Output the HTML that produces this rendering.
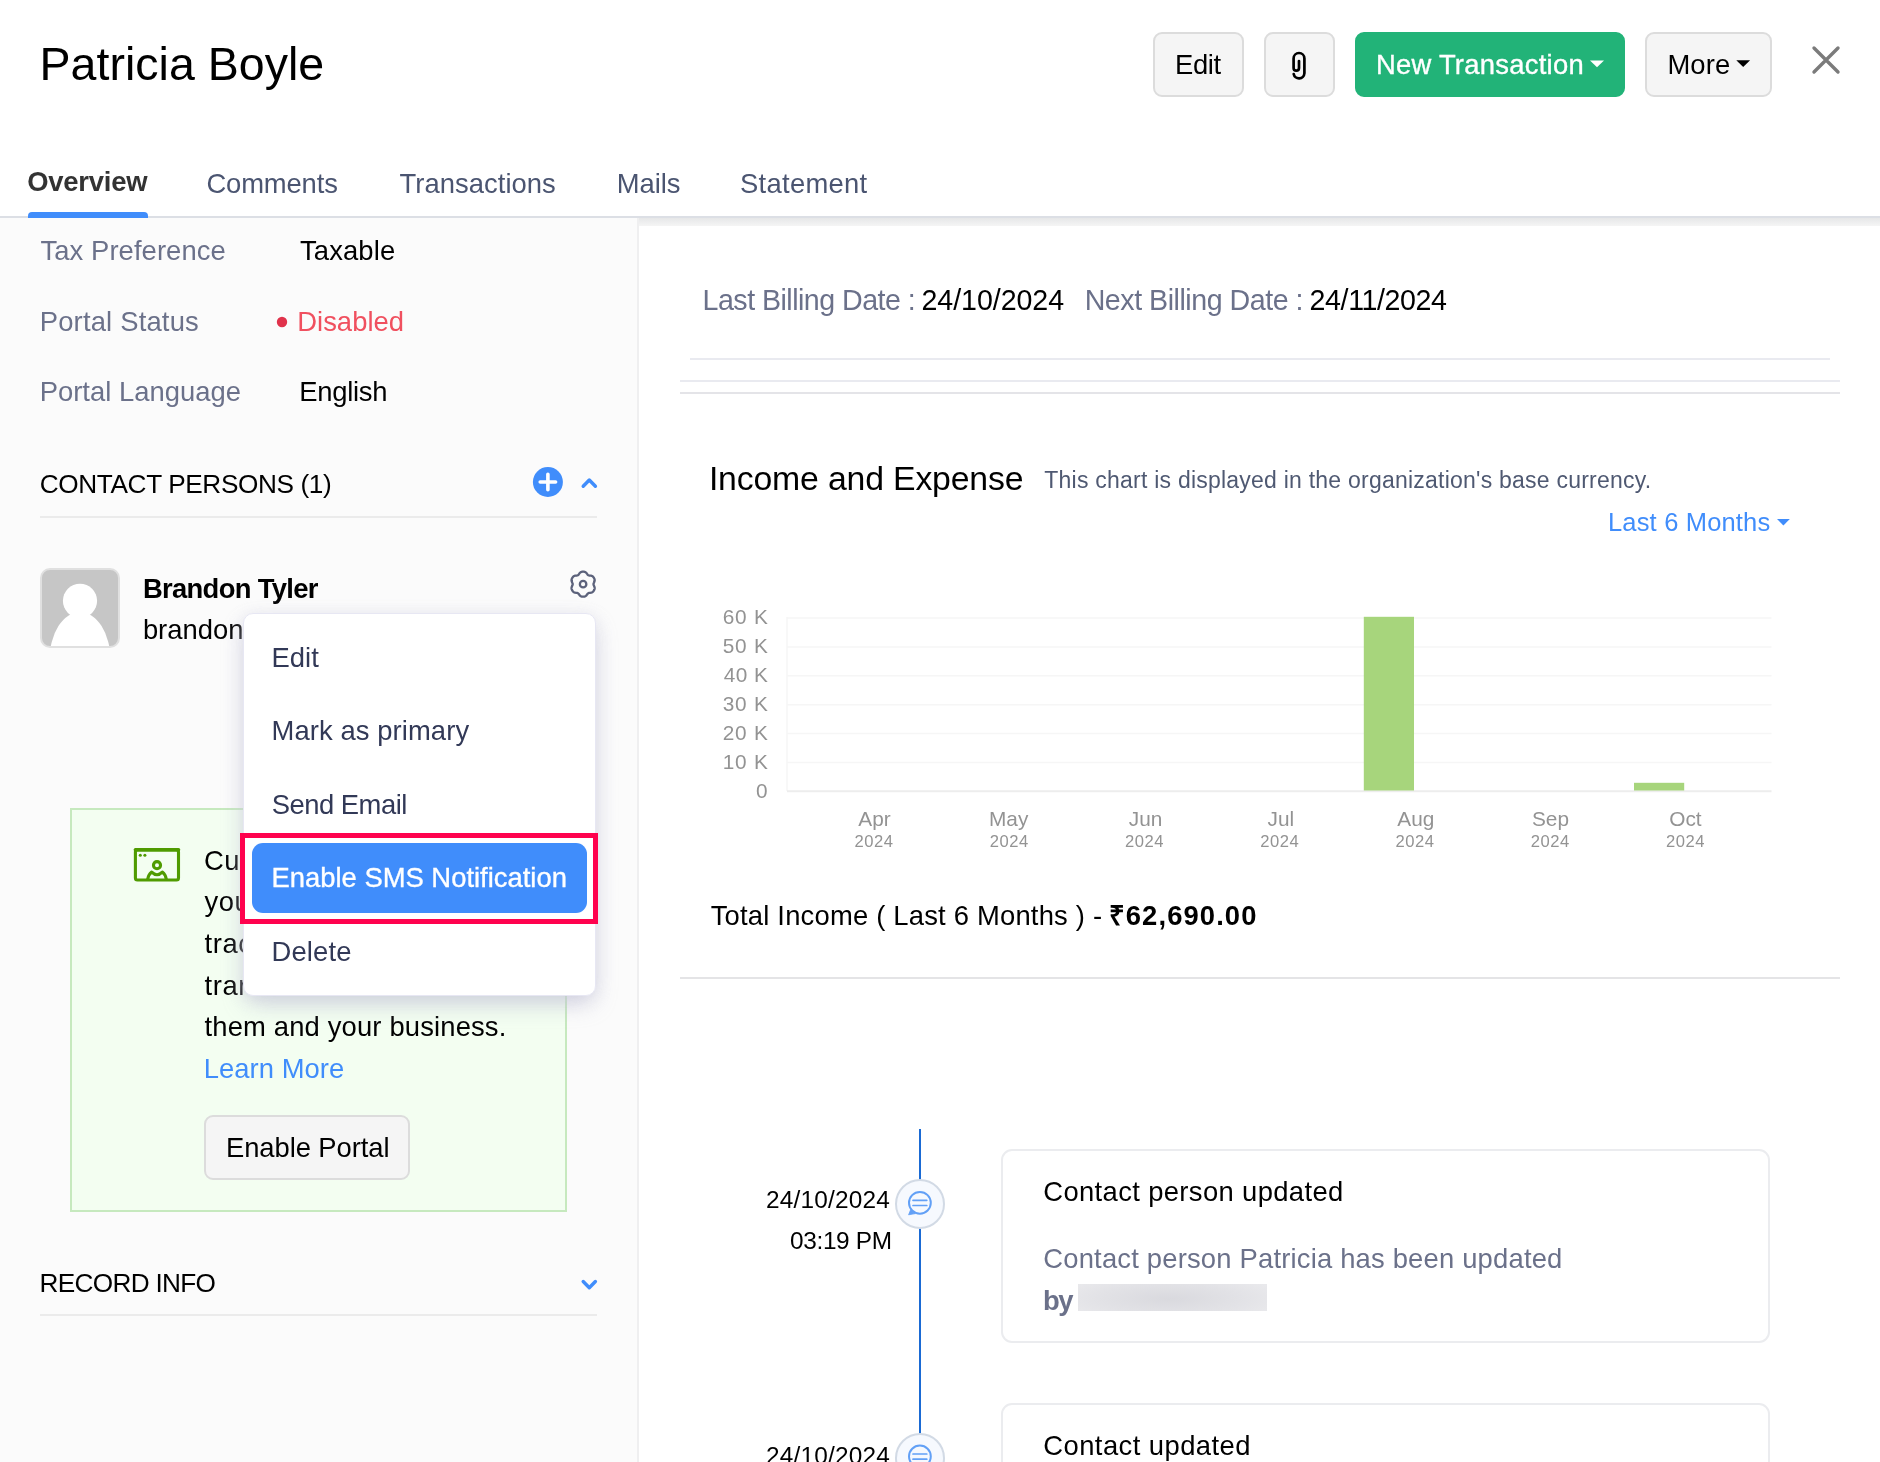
<!DOCTYPE html>
<html lang="en"><head><meta charset="utf-8"><title>Patricia Boyle</title>
<style>
*{box-sizing:border-box}
html,body{margin:0;padding:0}
body{width:1880px;height:1462px;overflow:hidden;background:#fff;font-family:"Liberation Sans",sans-serif;position:relative}
.abs,.t{position:absolute}
.t{white-space:pre;line-height:1;margin:0}
.hdr{left:0;top:0;width:1880px;height:218px;background:#fff;border-bottom:2px solid #dcdfe5}
.tabline{left:28px;top:212px;width:120px;height:6px;background:#408dfb;border-radius:4px 4px 0 0}
.btn{top:32px;height:65px;border:2px solid #dcdcdc;border-radius:9px;background:#f5f5f5}
.btn.green{background:#22b378;border-color:#22b378}
.left{left:0;top:218px;width:639px;height:1244px;background:#fbfbfb;border-right:2px solid #efeff0}
.rshadow{left:639px;top:218px;width:1242px;height:8px;background:linear-gradient(#e6e7e8,#f5f5f5)}
.hr{height:2px;background:#e9eaf0}
.greenbox{left:70px;top:808px;width:497px;height:404px;background:#f3fef1;border:2px solid #c6e9be}
.avatar{left:40px;top:568px;width:80px;height:80px;border-radius:10px;background:#c6c6c6;border:2px solid #e0e0e0;overflow:hidden}
.menu{left:243px;top:613px;width:353px;height:383px;background:#fff;border-radius:10px;border:1px solid #e7e7f3;box-shadow:0 10px 24px -4px rgba(188,188,210,.7),0 2px 16px rgba(214,214,228,.45)}
.menusel{left:252px;top:843px;width:335px;height:70px;background:#408dfb;border-radius:11px}
.hilite{left:240.1px;top:832.9px;width:357.9px;height:91.2px;border:5.2px solid #ff024e}
.card{left:1001px;width:769px;border:2px solid #ebecef;border-radius:11px;background:#fff}
.tl{left:919px;top:1129px;width:2px;height:340px;background:#1a6ad4}
.dot{width:50px;height:50px;border-radius:50%;background:#f6f9fe;border:2px solid #d2dae5;left:895px}
.blur{left:1078px;top:1283.5px;width:189px;height:27.5px;background:radial-gradient(ellipse 62% 90% at 48% 55%,#d9d9de 0%,#e2e2e6 60%,#e9e9ec 100%)}
svg{position:absolute;overflow:visible}
#texts0,#texts1{will-change:transform}

</style></head>
<body>
<div class="abs hdr"></div>
<div class="abs tabline"></div>
<div class="abs btn" style="left:1153px;width:91px"></div>
<div class="abs btn" style="left:1264px;width:71px"></div>
<div class="abs btn green" style="left:1355px;width:270px"></div>
<div class="abs btn" style="left:1645px;width:127px"></div>
<svg style="left:0;top:0" width="1880" height="218" viewBox="0 0 1880 218">
  <!-- paperclip -->
  <path d="M1299 61 V68 A2.7 2.7 0 0 1 1293.6 68 V58.4 A5.4 5.4 0 0 1 1304.4 58.4 V73.3 A5.4 5.4 0 0 1 1293.7 74" fill="none" stroke="#000" stroke-width="2.7" stroke-linecap="round"/>
  <!-- carets -->
  <path d="M1590 60.5 h14 l-7 6.8z" fill="#fff"/>
  <path d="M1736.3 60.3 h13.8 l-6.9 6.8z" fill="#000"/>
  <!-- close -->
  <path d="M1814 48 L1838 72 M1838 48 L1814 72" stroke="#7b7b7b" stroke-width="3.4" stroke-linecap="round"/>
</svg>

<div class="abs left"></div>
<div class="abs rshadow"></div>

<!-- left panel graphics -->
<svg style="left:0;top:0" width="640" height="1462" viewBox="0 0 640 1462">
  <circle cx="282" cy="322" r="5.2" fill="#e0324b"/>
  <circle cx="547.9" cy="482" r="15" fill="#408dfb"/>
  <path d="M540.2 482 h15.400 M547.9 474.300 v15.400" stroke="#fff" stroke-width="3.600" stroke-linecap="round"/>
  <path d="M583.2 486.3 L589.3 480 L595.4 486.3" fill="none" stroke="#408dfb" stroke-width="3.4" stroke-linecap="round" stroke-linejoin="round"/>
  <path d="M583.2 1281.5 L589.3 1287.8 L595.4 1281.5" fill="none" stroke="#408dfb" stroke-width="3.4" stroke-linecap="round" stroke-linejoin="round"/>
  <!-- gear -->
  <g transform="translate(583.1,584.2)" fill="none" stroke="#5c627b" stroke-width="2.3" stroke-linejoin="round">
    <path d="M10.40 0.00 L10.42 0.27 L10.47 0.55 L10.56 0.83 L10.67 1.12 L10.80 1.42 L10.95 1.73 L11.09 2.06 L11.23 2.39 L11.35 2.72 L11.45 3.07 L11.52 3.41 L11.56 3.76 L11.57 4.10 L11.54 4.43 L11.47 4.75 L11.38 5.07 L11.27 5.37 L11.13 5.67 L10.98 5.96 L10.83 6.25 L10.66 6.53 L10.48 6.81 L10.29 7.07 L10.08 7.32 L9.85 7.56 L9.60 7.78 L9.33 7.97 L9.03 8.13 L8.72 8.27 L8.38 8.38 L8.03 8.47 L7.68 8.53 L7.32 8.58 L6.97 8.61 L6.63 8.64 L6.31 8.68 L6.00 8.73 L5.71 8.79 L5.45 8.89 L5.20 9.01 L4.97 9.16 L4.76 9.34 L4.56 9.56 L4.36 9.80 L4.17 10.07 L3.97 10.35 L3.76 10.63 L3.55 10.92 L3.32 11.19 L3.07 11.45 L2.81 11.68 L2.53 11.89 L2.24 12.06 L1.93 12.20 L1.62 12.31 L1.30 12.39 L0.98 12.45 L0.65 12.48 L0.33 12.50 L0.00 12.50 L-0.33 12.50 L-0.65 12.48 L-0.98 12.45 L-1.30 12.39 L-1.62 12.31 L-1.93 12.20 L-2.24 12.06 L-2.53 11.89 L-2.81 11.68 L-3.07 11.45 L-3.32 11.19 L-3.55 10.92 L-3.76 10.63 L-3.97 10.35 L-4.17 10.07 L-4.36 9.80 L-4.56 9.56 L-4.76 9.34 L-4.97 9.16 L-5.20 9.01 L-5.45 8.89 L-5.71 8.79 L-6.00 8.73 L-6.31 8.68 L-6.63 8.64 L-6.97 8.61 L-7.32 8.58 L-7.68 8.53 L-8.03 8.47 L-8.38 8.38 L-8.72 8.27 L-9.03 8.13 L-9.33 7.97 L-9.60 7.78 L-9.85 7.56 L-10.08 7.32 L-10.29 7.07 L-10.48 6.81 L-10.66 6.53 L-10.83 6.25 L-10.98 5.96 L-11.13 5.67 L-11.27 5.37 L-11.38 5.07 L-11.47 4.75 L-11.54 4.43 L-11.57 4.10 L-11.56 3.76 L-11.52 3.41 L-11.45 3.07 L-11.35 2.72 L-11.23 2.39 L-11.09 2.06 L-10.95 1.73 L-10.80 1.42 L-10.67 1.12 L-10.56 0.83 L-10.47 0.55 L-10.42 0.27 L-10.40 0.00 L-10.42 -0.27 L-10.47 -0.55 L-10.56 -0.83 L-10.67 -1.12 L-10.80 -1.42 L-10.95 -1.73 L-11.09 -2.06 L-11.23 -2.39 L-11.35 -2.72 L-11.45 -3.07 L-11.52 -3.41 L-11.56 -3.76 L-11.57 -4.10 L-11.54 -4.43 L-11.47 -4.75 L-11.38 -5.07 L-11.27 -5.37 L-11.13 -5.67 L-10.98 -5.96 L-10.83 -6.25 L-10.66 -6.53 L-10.48 -6.81 L-10.29 -7.07 L-10.08 -7.32 L-9.85 -7.56 L-9.60 -7.78 L-9.33 -7.97 L-9.03 -8.13 L-8.72 -8.27 L-8.38 -8.38 L-8.03 -8.47 L-7.68 -8.53 L-7.32 -8.58 L-6.97 -8.61 L-6.63 -8.64 L-6.31 -8.68 L-6.00 -8.73 L-5.71 -8.79 L-5.45 -8.89 L-5.20 -9.01 L-4.97 -9.16 L-4.76 -9.34 L-4.56 -9.56 L-4.36 -9.80 L-4.17 -10.07 L-3.97 -10.35 L-3.76 -10.63 L-3.55 -10.92 L-3.32 -11.19 L-3.07 -11.45 L-2.81 -11.68 L-2.53 -11.89 L-2.24 -12.06 L-1.93 -12.20 L-1.62 -12.31 L-1.30 -12.39 L-0.98 -12.45 L-0.65 -12.48 L-0.33 -12.50 L-0.00 -12.50 L0.33 -12.50 L0.65 -12.48 L0.98 -12.45 L1.30 -12.39 L1.62 -12.31 L1.93 -12.20 L2.24 -12.06 L2.53 -11.89 L2.81 -11.68 L3.07 -11.45 L3.32 -11.19 L3.55 -10.92 L3.76 -10.63 L3.97 -10.35 L4.17 -10.07 L4.36 -9.80 L4.56 -9.56 L4.76 -9.34 L4.97 -9.16 L5.20 -9.01 L5.45 -8.89 L5.71 -8.79 L6.00 -8.73 L6.31 -8.68 L6.63 -8.64 L6.97 -8.61 L7.32 -8.58 L7.68 -8.53 L8.03 -8.47 L8.38 -8.38 L8.72 -8.27 L9.03 -8.13 L9.33 -7.97 L9.60 -7.78 L9.85 -7.56 L10.08 -7.32 L10.29 -7.07 L10.48 -6.81 L10.66 -6.53 L10.83 -6.25 L10.98 -5.96 L11.13 -5.67 L11.27 -5.37 L11.38 -5.07 L11.47 -4.75 L11.54 -4.43 L11.57 -4.10 L11.56 -3.76 L11.52 -3.41 L11.45 -3.07 L11.35 -2.72 L11.23 -2.39 L11.09 -2.06 L10.95 -1.73 L10.80 -1.42 L10.67 -1.12 L10.56 -0.83 L10.47 -0.55 L10.42 -0.27Z"/>
    <circle r="3.25"/>
  </g>
</svg>
<div class="abs hr" style="left:40px;top:516px;width:557px;background:#ebebeb"></div>
<div class="abs hr" style="left:40px;top:1314px;width:557px;background:#ebebeb"></div>
<div class="abs avatar">
  <svg style="left:-2px;top:-2px" width="80" height="80" viewBox="0 0 80 80"><circle cx="40" cy="32.8" r="17.1" fill="#fff"/><ellipse cx="40" cy="92" rx="30.5" ry="48" fill="#fff"/></svg>
</div>
<div class="abs greenbox"></div>
<svg style="left:0;top:0" width="640" height="1462" viewBox="0 0 640 1462">
  <g fill="none" stroke="#4f9b00" stroke-width="3.1" stroke-linejoin="round" stroke-linecap="round">
    <rect x="135.4" y="850" width="43.1" height="30" rx="2"/>
    <path d="M135.4 849.8 H178.5" stroke-width="3.6"/>
    <circle cx="157" cy="865.2" r="3.55"/>
    <path d="M147.6 879.5 C148.2 876 149.6 873.6 151.7 872.1 C153.5 873.9 155.2 874.7 157 874.7 C158.8 874.7 160.5 873.9 162.3 872.1 C164.4 873.6 165.8 876 166.4 879.5"/>
  </g>
  <circle cx="140.3" cy="855.2" r="1.55" fill="#4f9b00"/><circle cx="144.9" cy="855.2" r="1.55" fill="#4f9b00"/>
</svg>
<div class="abs btn" style="left:204px;top:1115px;width:206px;height:65px"></div>


<!-- right graphics -->
<div class="abs hr" style="left:689.5px;top:357.5px;width:1140px"></div>
<div class="abs hr" style="left:679.5px;top:379.5px;width:1160px"></div>
<div class="abs hr" style="left:679.5px;top:392px;width:1160px;background:#e4e4e8"></div>
<div class="abs hr" style="left:679.5px;top:976.5px;width:1160px;background:#e4e4e6"></div>
<svg style="left:0;top:0" width="1880" height="1462" viewBox="0 0 1880 1462">
  <path d="M1777 519 h12.800 l-6.400 6.600z" fill="#408dfb"/>
  <g stroke="#f6f6f6" stroke-width="1.5">
    <path d="M787 618 H1771.500 M787 646.900 H1771.500 M787 675.800 H1771.500 M787 704.700 H1771.500 M787 733.600 H1771.500 M787 762.500 H1771.500"/>
    <path d="M787 617 V791"/>
  </g>
  <path d="M787 791.300 H1771.500" stroke="#ededed" stroke-width="2"/>
  <rect x="1363.800" y="616.800" width="50.200" height="173.700" fill="#a7d57c"/>
  <rect x="1634" y="782.800" width="50.200" height="7.700" fill="#a7d57c"/>
</svg>
<div class="abs tl"></div>
<div class="abs dot" style="top:1178.5px"></div>
<div class="abs dot" style="top:1432.5px"></div>
<svg style="left:0;top:0" width="1880" height="1462" viewBox="0 0 1880 1462">
  <g id="bub">
    <circle cx="919.9" cy="1202.8" r="10.9" fill="none" stroke="#62a0f6" stroke-width="2"/>
    <path d="M913 1200.300 h13.8 M913 1205.500 h13.8" fill="none" stroke="#62a0f6" stroke-width="1.700" stroke-linecap="round"/>
    <path d="M908.6 1214.800 L910.7 1209.600 Q912.300 1212.500 915.300 1213.600 Z" fill="#62a0f6" stroke="#62a0f6" stroke-width="0.8" stroke-linejoin="round"/>
  </g>
  <use href="#bub" y="253.700"/>
</svg>
<div class="abs card" style="top:1149px;height:193.5px"></div>
<div class="abs card" style="top:1403px;height:120px"></div>
<div class="abs blur"></div>

<div id="texts0">
<span class="t" style="left:39.5px;top:41.3px;font-size:46.5px;color:#000;letter-spacing:0.03px;">Patricia Boyle</span>
<span class="t" style="left:27.2px;top:168.4px;font-size:27.4px;color:#333;font-weight:700;letter-spacing:-0.20px;">Overview</span>
<span class="t" style="left:206.4px;top:170.2px;font-size:27.4px;color:#4b5571;letter-spacing:-0.13px;">Comments</span>
<span class="t" style="left:399.6px;top:170.2px;font-size:27.4px;color:#4b5571;letter-spacing:0.04px;">Transactions</span>
<span class="t" style="left:616.8px;top:170.2px;font-size:27.4px;color:#4b5571;letter-spacing:-0.05px;">Mails</span>
<span class="t" style="left:740.0px;top:170.2px;font-size:27.4px;color:#4b5571;letter-spacing:0.29px;">Statement</span>
<span class="t" style="left:1175.1px;top:51.2px;font-size:27.4px;color:#000;letter-spacing:-0.37px;">Edit</span>
<span class="t" style="left:1375.9px;top:51.2px;font-size:27.4px;color:#fff;letter-spacing:0.27px;-webkit-text-stroke:0.35px currentColor;">New Transaction</span>
<span class="t" style="left:1667.4px;top:51.0px;font-size:27.4px;color:#000;letter-spacing:0.13px;">More</span>
<span class="t" style="left:40.5px;top:236.7px;font-size:27.4px;color:#6b718a;letter-spacing:0.08px;">Tax Preference</span>
<span class="t" style="left:300.0px;top:236.7px;font-size:27.4px;color:#000;letter-spacing:0.12px;">Taxable</span>
<span class="t" style="left:39.7px;top:307.7px;font-size:27.4px;color:#6b718a;letter-spacing:0.19px;">Portal Status</span>
<span class="t" style="left:297.2px;top:307.7px;font-size:27.4px;color:#f0505f;letter-spacing:0.04px;">Disabled</span>
<span class="t" style="left:39.7px;top:377.9px;font-size:27.4px;color:#6b718a;letter-spacing:0.02px;">Portal Language</span>
<span class="t" style="left:299.2px;top:377.9px;font-size:27.4px;color:#000;letter-spacing:-0.25px;">English</span>
<span class="t" style="left:39.8px;top:471.2px;font-size:26.2px;color:#000;letter-spacing:-0.38px;">CONTACT PERSONS (1)</span>
<span class="t" style="left:142.9px;top:574.8px;font-size:27.4px;color:#000;font-weight:700;letter-spacing:-0.67px;">Brandon Tyler</span>
<span class="t" style="left:142.9px;top:616.1px;font-size:27.4px;color:#000;">brandon</span>
<span class="t" style="left:204.0px;top:846.8px;font-size:27.4px;color:#000;letter-spacing:0.55px;">Customer Portal allows</span>
<span class="t" style="left:204.6px;top:888.4px;font-size:27.4px;color:#000;letter-spacing:0.55px;">your customers to keep</span>
<span class="t" style="left:204.6px;top:930.0px;font-size:27.4px;color:#000;letter-spacing:0.55px;">track of all the</span>
<span class="t" style="left:204.6px;top:971.6px;font-size:27.4px;color:#000;letter-spacing:0.55px;">transactions between</span>
<span class="t" style="left:204.6px;top:1013.2px;font-size:27.4px;color:#000;letter-spacing:0.15px;">them and your business.</span>
<span class="t" style="left:203.8px;top:1054.8px;font-size:27.4px;color:#408dfb;letter-spacing:0.04px;">Learn More</span>
<span class="t" style="left:226.0px;top:1134.1px;font-size:27.4px;color:#000;letter-spacing:-0.08px;">Enable Portal</span>
<span class="t" style="left:39.6px;top:1269.7px;font-size:26.2px;color:#000;letter-spacing:-0.70px;">RECORD INFO</span>
<span class="t" style="left:702.6px;top:286.0px;font-size:28.6px;color:#6b718a;letter-spacing:-0.52px;">Last Billing Date :</span>
<span class="t" style="left:921.5px;top:286.0px;font-size:28.6px;color:#000;letter-spacing:-0.06px;">24/10/2024</span>
<span class="t" style="left:1084.7px;top:286.0px;font-size:28.6px;color:#6b718a;letter-spacing:-0.47px;">Next Billing Date :</span>
<span class="t" style="left:1309.6px;top:286.0px;font-size:28.6px;color:#000;letter-spacing:-0.40px;">24/11/2024</span>
<span class="t" style="left:708.9px;top:462.2px;font-size:33.8px;color:#000;letter-spacing:-0.17px;">Income and Expense</span>
<span class="t" style="left:1044.3px;top:469.4px;font-size:23px;color:#4f5972;letter-spacing:0.23px;">This chart is displayed in the organization&#x27;s base currency.</span>
<span class="t" style="left:1608.0px;top:510.4px;font-size:25.5px;color:#408dfb;letter-spacing:0.17px;">Last 6 Months</span>
<span class="t" style="left:710.7px;top:901.9px;font-size:27.4px;color:#000;letter-spacing:0.20px;">Total Income ( Last 6 Months ) -</span>
<span class="t" style="left:1108.7px;top:901.9px;font-size:27.4px;color:#000;font-weight:700;letter-spacing:1.10px;">₹62,690.00</span>
<span class="t" style="left:722.8px;top:607.4px;font-size:20.8px;color:#939393;letter-spacing:0.73px;">60 K</span>
<span class="t" style="left:722.8px;top:636.3px;font-size:20.8px;color:#939393;letter-spacing:0.73px;">50 K</span>
<span class="t" style="left:723.8px;top:665.2px;font-size:20.8px;color:#939393;letter-spacing:0.40px;">40 K</span>
<span class="t" style="left:722.8px;top:694.0px;font-size:20.8px;color:#939393;letter-spacing:0.73px;">30 K</span>
<span class="t" style="left:722.8px;top:722.9px;font-size:20.8px;color:#939393;letter-spacing:0.73px;">20 K</span>
<span class="t" style="left:722.8px;top:751.8px;font-size:20.8px;color:#939393;letter-spacing:0.73px;">10 K</span>
<span class="t" style="left:756.0px;top:780.6px;font-size:20.8px;color:#939393;">0</span>
<span class="t" style="left:858.3px;top:809.4px;font-size:20.8px;color:#939393;">Apr</span>
<span class="t" style="left:854.5px;top:834.2px;font-size:16.6px;color:#939393;letter-spacing:0.50px;">2024</span>
<span class="t" style="left:989.0px;top:809.4px;font-size:20.8px;color:#939393;">May</span>
<span class="t" style="left:989.8px;top:834.2px;font-size:16.6px;color:#939393;letter-spacing:0.50px;">2024</span>
<span class="t" style="left:1128.8px;top:809.4px;font-size:20.8px;color:#939393;">Jun</span>
<span class="t" style="left:1125.0px;top:834.2px;font-size:16.6px;color:#939393;letter-spacing:0.50px;">2024</span>
<span class="t" style="left:1267.5px;top:809.4px;font-size:20.8px;color:#939393;">Jul</span>
<span class="t" style="left:1260.3px;top:834.2px;font-size:16.6px;color:#939393;letter-spacing:0.50px;">2024</span>
<span class="t" style="left:1397.3px;top:809.4px;font-size:20.8px;color:#939393;">Aug</span>
<span class="t" style="left:1395.5px;top:834.2px;font-size:16.6px;color:#939393;letter-spacing:0.50px;">2024</span>
<span class="t" style="left:1532.0px;top:809.4px;font-size:20.8px;color:#939393;">Sep</span>
<span class="t" style="left:1530.8px;top:834.2px;font-size:16.6px;color:#939393;letter-spacing:0.50px;">2024</span>
<span class="t" style="left:1669.3px;top:809.4px;font-size:20.8px;color:#939393;">Oct</span>
<span class="t" style="left:1666.0px;top:834.2px;font-size:16.6px;color:#939393;letter-spacing:0.50px;">2024</span>
<span class="t" style="left:766.0px;top:1188.4px;font-size:24.4px;color:#000;letter-spacing:0.18px;">24/10/2024</span>
<span class="t" style="left:790.0px;top:1229.0px;font-size:24.4px;color:#000;letter-spacing:-0.34px;">03:19 PM</span>
<span class="t" style="left:766.0px;top:1443.6px;font-size:24.4px;color:#000;letter-spacing:0.18px;">24/10/2024</span>
<span class="t" style="left:1043.3px;top:1178.2px;font-size:27.4px;color:#000;letter-spacing:0.36px;">Contact person updated</span>
<span class="t" style="left:1043.3px;top:1244.6px;font-size:27.4px;color:#6b718a;letter-spacing:0.19px;">Contact person Patricia has been updated</span>
<span class="t" style="left:1043.1px;top:1286.7px;font-size:27.4px;color:#6b718a;font-weight:700;letter-spacing:-1.60px;">by</span>
<span class="t" style="left:1043.3px;top:1431.9px;font-size:27.4px;color:#000;letter-spacing:0.44px;">Contact updated</span>
</div>

<!-- dropdown -->
<div class="abs menu"></div>
<div class="abs menusel"></div>
<div class="abs hilite"></div>
<div id="texts1">
<span class="t" style="left:271.5px;top:643.9px;font-size:27.4px;color:#323957;letter-spacing:0.03px;">Edit</span>
<span class="t" style="left:271.5px;top:716.6px;font-size:27.4px;color:#323957;letter-spacing:0.09px;">Mark as primary</span>
<span class="t" style="left:271.7px;top:790.9px;font-size:27.4px;color:#323957;letter-spacing:-0.49px;">Send Email</span>
<span class="t" style="left:271.5px;top:863.8px;font-size:27.4px;color:#fff;-webkit-text-stroke:0.35px currentColor;">Enable SMS Notification</span>
<span class="t" style="left:271.5px;top:938.4px;font-size:27.4px;color:#323957;letter-spacing:0.16px;">Delete</span>
</div>

</body></html>
